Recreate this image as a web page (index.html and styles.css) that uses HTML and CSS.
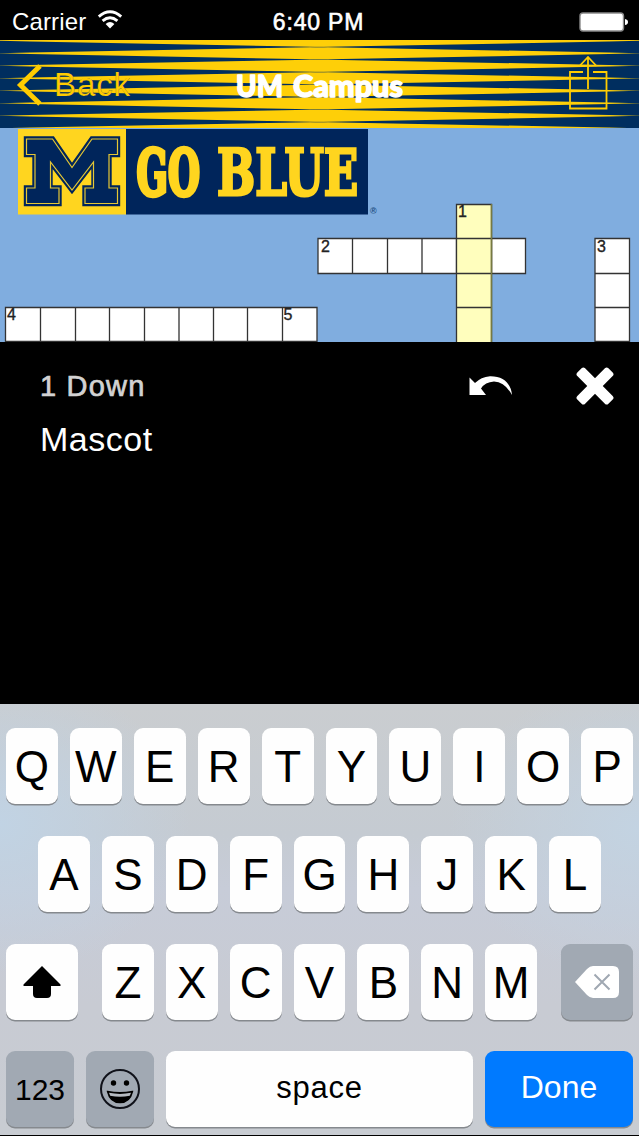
FILE: index.html
```
<!DOCTYPE html>
<html lang="en">
<head>
<meta charset="utf-8">
<title>UM Campus</title>
<link rel="stylesheet" href="styles.css">
</head>
<body>
<main class="app">
  <header class="status">
    <div class="carrier"><span class="carrier-name">Carrier</span>
      <svg class="wifi" width="26" height="20" viewBox="0 0 26 20"><g fill="none" stroke="#fff" stroke-width="2.9"><path d="M1.8 6.6Q13-3.2 24.2 6.6"/><path d="M5.6 10.9Q13 4.7 20.4 10.9"/></g><path d="M8.6 13.9Q13 10.3 17.4 13.9L13 18.6Z" fill="#fff"/></svg>
    </div>
    <span class="time">6:40 PM</span>
    <svg class="battery" width="50" height="20" viewBox="0 0 50 20"><rect x="1" y="1" width="43.5" height="18" rx="3" fill="#fff" stroke="#8a8a8a" stroke-width="1.4"/><path d="M46 7q3 .5 3 3t-3 3z" fill="#fff"/></svg>
  </header>
  <nav class="nav">
    <svg class="stripes" width="639" height="88" viewBox="0 0 639 88">
      <defs><path id="streak" d="M0 0L30 .8 324 6.2 30 11.7 0 12.5ZM639 0L609 .8 315 6.2 609 11.700 639 12.5Z"/></defs>
      <rect width="639" height="88" fill="#fecf08"/>
      <g fill="#002e5f"><use href="#streak" y=".8"/><use href="#streak" y="13.300"/><use href="#streak" y="25.8"/><use href="#streak" y="38.300"/><use href="#streak" y="50.8"/><use href="#streak" y="63.300"/><use href="#streak" y="75.8"/></g>
    </svg>
    <div class="back"><svg width="28" height="44" viewBox="0 0 28 44"><path d="M24 3 4.500 22 24 41" fill="none" stroke="#fc0" stroke-width="5"/></svg><span>Back</span></div>
    <svg class="title" width="174" height="40" viewBox="0 0 174 40"><text x="3" y="24.500" textLength="47" lengthAdjust="spacingAndGlyphs" transform="scale(1 1.1)">UM</text><text x="60" y="24.500" textLength="110" lengthAdjust="spacingAndGlyphs" transform="scale(1 1.1)">Campus</text></svg>
    <svg class="share" width="40" height="58" viewBox="0 0 40 58"><path d="M15 18H2V54.500H38.500V18H25M20 35V4M11.500 12 20 3 28.500 12" fill="none" stroke="#fc0" stroke-width="1.8"/></svg>
  </nav>
  <section class="board">
    <svg width="639" height="214" viewBox="0 0 639 214">
      <rect width="639" height="214" fill="#80addf"/>
      <rect x="18" y="1" width="108" height="85.500" fill="#ffd51f"/>
      <rect x="126" y="1" width="242" height="85.500" fill="#00255b"/>
      <g transform="translate(0 -16)">
        <path d="M24.500 25H53.500L72 52 91 25H119.500V44.500H111V74H119.500V93.500H83V74H92V55L72 81 52 55V74H61V93.500H24.500V74H33V44.500H24.500Z" fill="#00255b" stroke="#00255b" stroke-width="1.4"/>
        <path d="M26.500 27H52.500L72 55.500 92 27H117.500V42.500H109V76H117.500V91.500H85V76H93.500V50L72 78 50.500 50V76H59V91.500H26.500V76H35V42.500H26.500Z" fill="none" stroke="#e4c735" stroke-width="1.2"/>
      </g>
      <g class="cheer">
        <text class="heavy" transform="translate(136.500 66.500) scale(.587 1)" textLength="108" lengthAdjust="spacingAndGlyphs">GO</text>
        <text transform="translate(217 66.500) scale(.706 1)" textLength="200" lengthAdjust="spacingAndGlyphs">BLUE</text>
      </g>
      <text class="registered" x="370" y="86">®</text>
      <g fill="#fff" stroke="#333" stroke-width="1.3">
        <path d="M318 110.500H525.500V145.500H318ZM352.500 110.500v35M387.500 110.500v35M422 110.500v35M456.500 110.500v35M491.500 110.500v35"/>
        <path d="M5.500 179.500H317V213.500H5.500ZM40.500 179.500v34M75.500 179.500v34M109.500 179.500v34M144.500 179.500v34M179 179.500v34M213.500 179.500v34M247.500 179.500v34M282.500 179.500v34"/>
        <path d="M595 110.500H629.500V213.500H595ZM595 145.500h34.500M595 179.500h34.500"/>
        <path d="M456.500 76.500H491.500V216H456.500ZM456.500 110.500h35M456.500 145.500h35M456.500 179.500h35" fill="#fffebd"/>
      </g>
      <path d="M491.500 76V214" stroke="#777a42" stroke-width="1.5"/>
      <g class="clue-number"><text x="458" y="89">1</text><text x="321" y="124">2</text><text x="597" y="124">3</text><text x="7" y="192">4</text><text x="283.500" y="192">5</text></g>
    </svg>
  </section>
  <section class="clue">
    <div class="clue-text"><h1>1 Down</h1><p>Mascot</p></div>
    <div class="tools">
      <svg width="44" height="24" viewBox="0 0 44 24"><path d="M.5 3.500 6 9Q12 3 21 2.200C34 2 42 9 43 21Q36 8 25 7.500Q16 8 12 14.500L17 21H.5Z" fill="#fff"/></svg>
      <svg width="38" height="38" viewBox="0 0 38 38"><g fill="#fff"><rect x="-3" y="13.500" width="44" height="11" rx="2.500" transform="rotate(45 19 19)"/><rect x="-3" y="13.500" width="44" height="11" rx="2.500" transform="rotate(-45 19 19)"/></g></svg>
    </div>
  </section>
  <section class="keyboard">
    <div class="row"><b class="key">Q</b><b class="key">W</b><b class="key">E</b><b class="key">R</b><b class="key">T</b><b class="key">Y</b><b class="key">U</b><b class="key">I</b><b class="key">O</b><b class="key">P</b></div>
    <div class="row middle"><b class="key">A</b><b class="key">S</b><b class="key">D</b><b class="key">F</b><b class="key">G</b><b class="key">H</b><b class="key">J</b><b class="key">K</b><b class="key">L</b></div>
    <div class="row lower">
      <b class="key shift"><svg width="38" height="34" viewBox="0 0 38 34"><path d="M19 1 37.500 19.500V21H28V29Q28 33 24 33H14Q10 33 10 29V21H.5V19.500Z"/></svg></b>
      <b class="key">Z</b><b class="key">X</b><b class="key">C</b><b class="key">V</b><b class="key">B</b><b class="key">N</b><b class="key">M</b>
      <b class="key gray delete"><svg width="44" height="34" viewBox="0 0 44 34"><path d="M0 17 12 4Q15 1 18 1H38Q44 1 44 7V27Q44 33 38 33H18Q15 33 12 30Z" fill="#fff"/><path d="M19.500 9.500 34.500 24.500M34.500 9.500 19.500 24.500" stroke="#a0a8b2" stroke-width="2"/></svg></b>
    </div>
    <div class="row bottom">
      <b class="key gray numbers">123</b>
      <b class="key gray emoji"><svg width="42" height="42" viewBox="0 0 42 42"><circle cx="21" cy="21" r="19" fill="none" stroke="#10121a" stroke-width="2"/><circle cx="14.500" cy="15" r="2.700"/><circle cx="27.500" cy="15" r="2.700"/><path d="M8.500 23.500Q21 26 33.500 23.500Q31 34.500 21 34.500T8.500 23.500Z" stroke="#000" stroke-width="1.300"/><path d="M10 24.800Q21 27 32 24.800L30.800 27.700Q21 30 11.200 27.700Z" fill="#b5bac1"/></svg></b>
      <b class="key space">space</b><b class="key done">Done</b>
    </div>
  </section>
</main>
</body>
</html>
```
FILE: styles.css
```
* { box-sizing: border-box; }
body { margin: 0; background: #000; color: #fff; font-family: "Liberation Sans", Arial, sans-serif; }
svg { display: block; flex: none; }
.app { width: 639px; height: 1136px; display: flex; flex-direction: column; overflow: hidden; }
.status { height: 40px; flex: none; padding: 3px 14px 0 12px; display: grid; grid-template-columns: 1fr auto 1fr; align-items: center; font-size: 24px; }
.carrier { display: flex; align-items: center; gap: 11px; }
.carrier-name { letter-spacing: .15px; }
.wifi { margin-top: -4px; }
.time { font-size: 23px; letter-spacing: .8px; -webkit-text-stroke: .6px #fff; padding-top: 2px; }
.battery { justify-self: end; margin-right: -4px; }
.nav { height: 88px; flex: none; display: grid; grid-template-columns: 1fr auto 1fr; align-items: center; padding: 1px 31px 0 16px; position: relative; }
.stripes { position: absolute; inset: 0; }
.back, .title, .share { position: relative; }
.back { display: flex; align-items: center; gap: 10px; color: #fc0; font-size: 33px; }
.back span { letter-spacing: .9px; line-height: 44px; -webkit-text-stroke: .2px #002e5f; }
.title { margin-left: 15px; margin-top: 11px; overflow: visible; }
.title text { font: 900 28px Lato, "Open Sans", sans-serif; fill: #fff; stroke: #fff; stroke-width: 1.3px; stroke-linejoin: round; }
.share { justify-self: end; margin-top: -4px; }
.board { height: 214px; flex: none; }
.cheer { font: bold 64px "DejaVu Serif", serif; fill: #ffd51f; stroke: #ffd51f; stroke-width: 3px; }
.heavy { stroke-width: 4.5px; }
.registered { font-size: 9px; font-weight: bold; fill: #245184; }
.clue-number { font-size: 16px; fill: #222; stroke: #222; stroke-width: .35px; }
.clue { height: 362px; flex: none; padding: 25px 25px 0 40px; display: flex; justify-content: space-between; }
.clue h1 { margin: 0; font-size: 29px; line-height: 38px; font-weight: normal; color: #d2d2d2; letter-spacing: 1.2px; -webkit-text-stroke: .7px #d2d2d2; }
.clue p { margin: 13px 0 0; font-size: 34px; line-height: 42px; letter-spacing: .5px; }
.tools { height: 38px; display: flex; align-items: center; gap: 63px; }
.keyboard { height: 431px; flex: none; padding: 24px 6px 0; display: flex; flex-direction: column; gap: 32px; background: radial-gradient(ellipse 190px 150px at 0 120px, #c1d3e4, transparent), radial-gradient(ellipse 190px 150px at 639px 125px, #c3d3e2, transparent), linear-gradient(#cacdd0, #c5cbd2 30%, #c7ccd8 43%, #c8cbd3 70%, #c8ccd2); }
.row { height: 76px; flex: none; display: flex; gap: 12px; }
.middle { padding: 0 32px; }
.key { flex: 1 1 0; height: 76px; display: flex; align-items: center; justify-content: center; border-radius: 9px; background: #fefefe; box-shadow: 0 1.500px 0 #85898e; color: #000; font-size: 44px; font-weight: normal; padding-top: 2px; }
.shift { flex: 0 0 72px; margin-right: 12px; padding-top: 0; }
.delete { flex: 0 0 72px; margin-left: 12px; padding-top: 0; }
.gray { background: #a1a9b3; }
.numbers { flex: 0 0 68px; font-size: 30px; }
.emoji { flex: 0 0 68px; padding-top: 0; }
.space { font-size: 31px; letter-spacing: .8px; padding-top: 0; padding-bottom: 3px; }
.done { flex: 0 0 148px; font-size: 32px; background: #007aff; color: #fff; padding-top: 0; padding-bottom: 3px; }
.lower, .bottom { margin-top: -.5px; }
```
